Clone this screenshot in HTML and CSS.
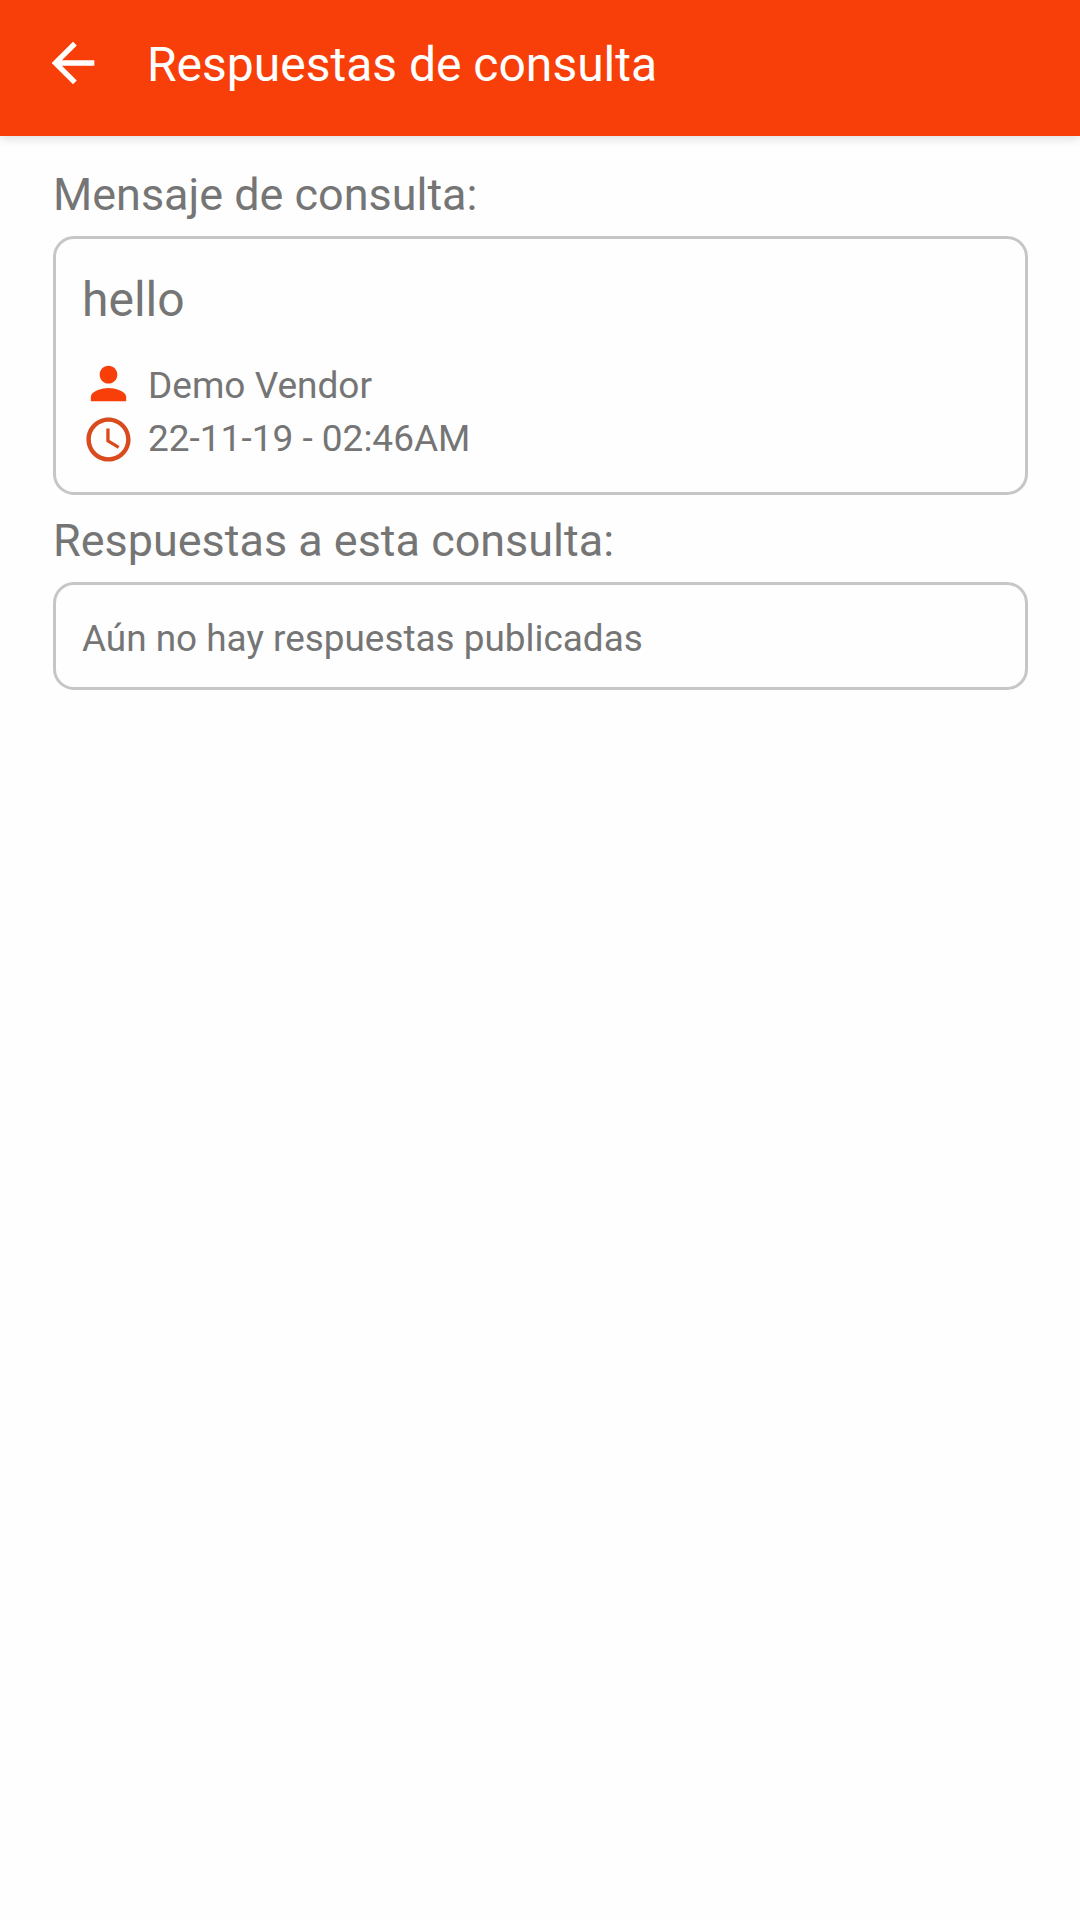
FILE: index.html
```html
<!DOCTYPE html>
<html lang="es">
<head>
<meta charset="utf-8">
<title>Respuestas de consulta</title>
<link rel="stylesheet" href="styles.css">
</head>
<body>
<header class="app-bar">
  <svg class="back" viewBox="0 0 24 24"><path d="M20 11H7.83l5.59-5.59L12 4l-8 8 8 8 1.41-1.41L7.83 13H20z"/></svg>
  <h1 class="title">Respuestas de consulta</h1>
</header>
<main class="content">
  <h2 class="label">Mensaje de consulta:</h2>
  <section class="card message">
    <p class="text">hello</p>
    <div class="meta">
      <svg class="icon person" viewBox="0 0 24 24"><path d="M12 12c2.21 0 4-1.79 4-4s-1.79-4-4-4-4 1.79-4 4 1.79 4 4 4zm0 2c-2.67 0-8 1.34-8 4v2h16v-2c0-2.66-5.33-4-8-4z"/></svg>
      <span>Demo Vendor</span>
    </div>
    <div class="meta">
      <svg class="icon clock" viewBox="0 0 24 24"><path d="M11.99 2C6.47 2 2 6.48 2 12s4.47 10 9.99 10C17.52 22 22 17.52 22 12S17.52 2 11.99 2zM12 20c-4.42 0-8-3.58-8-8s3.58-8 8-8 8 3.58 8 8-3.58 8-8 8zm.5-13H11v6l5.25 3.15.75-1.23-4.5-2.67z"/></svg>
      <span>22-11-19 - 02:46AM</span>
    </div>
  </section>
  <h2 class="label replies">Respuestas a esta consulta:</h2>
  <section class="card empty">Aún no hay respuestas publicadas</section>
</main>
</body>
</html>
```
FILE: styles.css
```css
* { box-sizing: border-box; }
body { margin: 0; min-height: 1920px; background: #fefefe; color: #757575; font-family: Roboto, sans-serif; }
h1, h2, p { margin: 0; font-weight: 400; }
svg { display: block; flex: none; }
.app-bar { display: flex; align-items: flex-start; height: 136px; padding: 30px 42px 0 41px; background: #f83f09; color: #fff; box-shadow: 0 2px 10px rgba(0,0,0,.14); }
.back { width: 64px; height: 64px; margin-top: 1px; fill: #fff; }
.title { margin: 7px 0 0 42px; font-size: 48px; line-height: 56px; }
.content { padding: 33px 52px 0 53px; }
.label { height: 67px; font-size: 44.95px; line-height: 52px; }
.card { border: 3px solid #c6c6c6; border-radius: 21px; }
.message { height: 259px; padding: 33px 26px 0; }
.text { height: 87px; font-size: 48px; line-height: 56px; }
.meta { display: flex; align-items: center; height: 53px; font-size: 37px; line-height: 53px; }
.icon { width: 53px; height: 53px; margin-right: 13px; fill: #f83f09; }
.person { margin-top: -4px; }
.clock { margin-top: 1px; fill: #d94b1e; }
.replies { height: 87px; padding-top: 20px; }
.empty { height: 108px; padding: 3px 26px 0; font-size: 36.9px; line-height: 102px; }
```
